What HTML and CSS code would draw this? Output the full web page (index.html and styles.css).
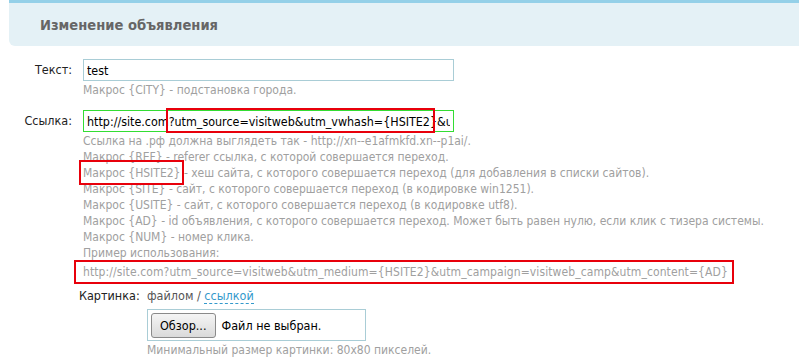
FILE: index.html
```html
<!DOCTYPE html>
<html lang="ru">
<head>
    <meta charset="UTF-8">
    <title>Изменение объявления</title>
    <link rel="stylesheet" href="styles.css">
</head>
<body>
    <div class="header">
        <h1>Изменение объявления</h1>
    </div>

    <div class="form">
        <div class="row">
            <div class="label">Текст:</div>
            <div class="field">
                <input type="text" class="input" value="test">
                <div class="hint">Макрос {CITY} - подстановка города.</div>
            </div>
        </div>

        <div class="row row-link">
            <div class="label">Ссылка:</div>
            <div class="field">
                <div class="link-wrap">
                    <input type="text" class="input input-ok" value="http://site.com?utm_source=visitweb&amp;utm_vwhash={HSITE2}&amp;utm_campaign=visitweb_camp">
                    <span class="mark mark-input"></span>
                </div>
                <div class="hint">
                    Ссылка на .рф должна выглядеть так - http://xn--e1afmkfd.xn--p1ai/.<br>
                    Макрос {REF} - referer ссылка, с которой совершается переход.<br>
                    <span class="mark-inline">Макрос {HSITE2}</span> - хеш сайта, с которого совершается переход (для добавления в списки сайтов).<br>
                    Макрос {SITE} - сайт, с которого совершается переход (в кодировке win1251).<br>
                    Макрос {USITE} - сайт, с которого совершается переход (в кодировке utf8).<br>
                    Макрос {AD} - id объявления, с которого совершается переход. Может быть равен нулю, если клик с тизера системы.<br>
                    Макрос {NUM} - номер клика.<br>
                    Пример использования:<br>
                    <span class="mark-inline mark-example">http://site.com?utm_source=visitweb&amp;utm_medium={HSITE2}&amp;utm_campaign=visitweb_camp&amp;utm_content={AD}</span>
                </div>
            </div>
        </div>

        <div class="row row-pic">
            <div class="label">Картинка:</div>
            <div class="field">
                <div class="switch">файлом / <span class="switch-link">ссылкой</span></div>
                <div class="file-box">
                    <span class="file-btn">Обзор...</span>
                    <span class="file-name">Файл не выбран.</span>
                </div>
                <div class="hint">Минимальный размер картинки: 80x80 пикселей.</div>
            </div>
        </div>
    </div>
</body>
</html>
```

FILE: styles.css
```css
body {
    margin: 0;
    font-family: 'DejaVu Sans Condensed', 'DejaVu Sans', sans-serif;
    font-size: 12px;
    color: #222;
    background: #fff;
}

.header {
    margin-left: 9px;
    height: 43px;
    background-color: #e4f1f6;
    border-top: 3px solid #94d0e8;
    border-bottom-left-radius: 6px;
}

.header h1 {
    margin: 0;
    padding: 13px 0 0 31px;
    font-size: 14.6px;
    font-weight: bold;
    color: #666;
}

.form {
    padding-top: 13px;
}

.row {
    display: flex;
    gap: 11px;
}

.label {
    width: 72px;
    text-align: right;
    font-size: 12.5px;
    padding-top: 3px;
}

.input {
    display: block;
    width: 371px;
    height: 22px;
    box-sizing: border-box;
    margin: 0;
    padding: 0 3px;
    border: 1px solid #a9cdd6;
    font-family: inherit;
    font-size: 12.4px;
    color: #000;
    outline: none;
}

.input-ok {
    border-color: #33dd33;
}

.hint {
    color: #a0a0a0;
    line-height: 16px;
    margin-top: 1px;
}

.row-link {
    margin-top: 12px;
}

.link-wrap {
    position: relative;
}

.mark {
    position: absolute;
    border: 2px solid #e8000b;
}

.mark-input {
    left: 83px;
    top: -2px;
    width: 265px;
    height: 21px;
}

.mark-inline {
    padding: 2px 0 1px;
    outline: 2px solid #e8000b;
    outline-offset: 2px;
}

.mark-example {
    display: inline-block;
    margin: 3px 0 0 -5px;
    padding: 0 2px 0 5px;
    letter-spacing: 0.1px;
}

.row-pic {
    margin-top: 8px;
    margin-left: 79px;
    gap: 13px;
}

.row-pic .label {
    width: 55px;
    text-align: left;
    padding-top: 0;
}

.switch {
    font-size: 12.5px;
    color: #555;
    height: 17px;
}

.switch-link {
    color: #3399cc;
    border-bottom: 1px dashed #3399cc;
}

.file-box {
    display: flex;
    align-items: center;
    gap: 6px;
    width: 219px;
    height: 32px;
    box-sizing: border-box;
    margin-top: 4px;
    padding: 0 3px;
    border: 1px solid #a9cdd6;
    font-size: 12.5px;
}

.file-btn {
    padding: 4px 8px;
    border: 1px solid #8a8a8a;
    border-radius: 3px;
    background: linear-gradient(#f5f5f5, #dadada);
    color: #000;
}

.file-name {
    color: #000;
}
```
